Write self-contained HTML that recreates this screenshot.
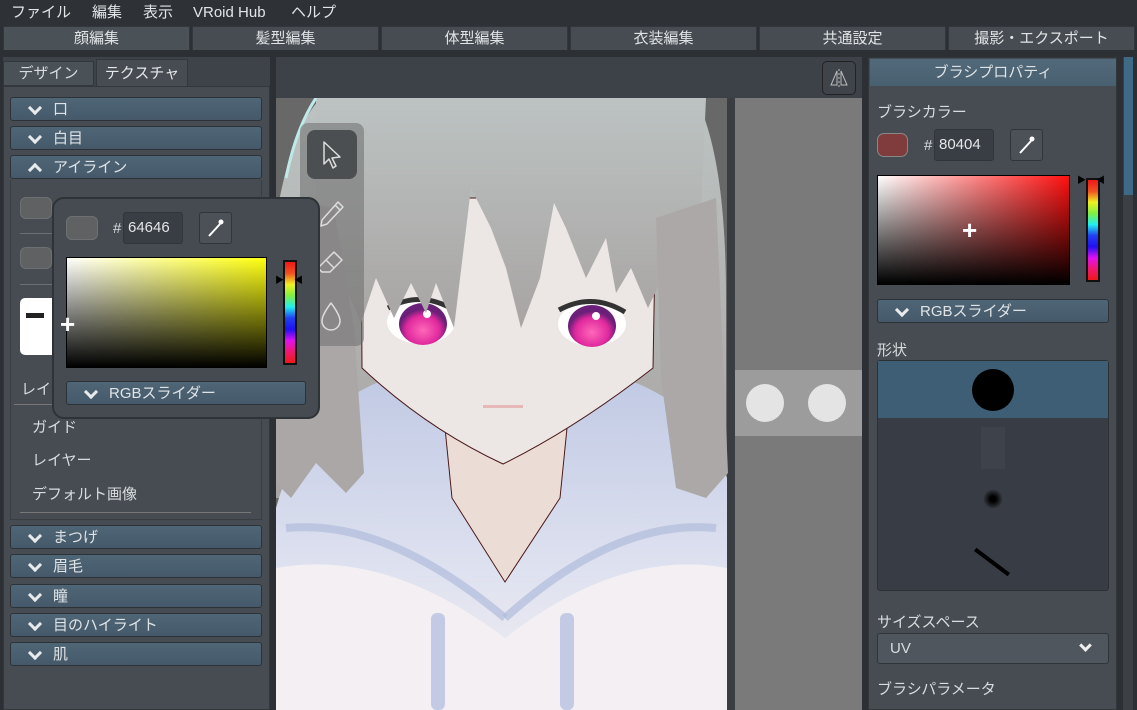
<!DOCTYPE html>
<html><head><meta charset="utf-8"><style>
*{box-sizing:border-box;margin:0;padding:0}
body{width:1137px;height:710px;overflow:hidden;background:#2c3034;font-family:"Liberation Sans","Noto Sans CJK JP",sans-serif;color:#d8dcdf;position:relative}
.a{position:absolute;line-height:20px}
.menu span{position:absolute;top:3px;font-size:15px;line-height:20px;color:#e2e4e6}
.tab{position:absolute;top:26px;height:24px;background:#464c52;border:1px solid #32373b;border-bottom:none;text-align:center;font-size:15px;line-height:23px;color:#e0e3e5}
.acc{position:absolute;left:10px;width:252px;height:24px;background:linear-gradient(#4f6676,#45596a);border:1px solid #2c3338;border-radius:3px;font-size:15px;line-height:23px;color:#dfe3e6;padding-left:42px}
.acc:before{content:"";position:absolute;left:19px;top:5px;width:7px;height:7px;border-right:3px solid #e8eaec;border-bottom:3px solid #e8eaec;transform:rotate(45deg)}
.acc.up:before{top:9px;transform:rotate(-135deg)}
.hue{background:linear-gradient(#f01818,#f05020,#f0f020,#80f040,#20f0f0,#2040f0,#2010f0,#e010f0,#f01870,#f01818);border:2px solid #111}
</style></head><body>
<div class="menu a" style="left:0;top:0;width:1137px;height:26px;background:#2e3236">
<span style="left:11px">ファイル</span><span style="left:92px">編集</span><span style="left:143px">表示</span><span style="left:193px">VRoid Hub</span><span style="left:291px">ヘルプ</span></div>
<div class="tab" style="left:3px;width:187px;background:#4a5157">顔編集</div>
<div class="tab" style="left:192px;width:187px">髪型編集</div>
<div class="tab" style="left:381px;width:187px">体型編集</div>
<div class="tab" style="left:570px;width:187px">衣装編集</div>
<div class="tab" style="left:759px;width:187px">共通設定</div>
<div class="tab" style="left:948px;width:187px">撮影・エクスポート</div>

<!-- left panel -->
<div class="a" style="left:3px;top:57px;width:267px;height:653px;background:#3d4348"></div>
<div class="a" style="left:3px;top:61px;width:91px;height:25px;background:#4a5157;border:1px solid #32373b;font-size:15px;line-height:23px;text-align:center;color:#d8dcdf">デザイン</div>
<div class="a" style="left:96px;top:59px;width:92px;height:28px;background:#464c51;border:1px solid #32373b;border-bottom:none;font-size:15px;line-height:27px;text-align:center;color:#e6e8ea">テクスチャ</div>
<div class="a" style="left:3px;top:86px;width:267px;height:624px;background:#464c51;border:1px solid #32373b"></div>
<div class="acc" style="top:97px">口</div>
<div class="acc" style="top:126px">白目</div>
<div class="acc up" style="top:155px">アイライン</div>
<div class="a" style="left:10px;top:180px;width:252px;height:340px;border:1px solid #393e43;border-top:none"></div>
<div class="a" style="left:20px;top:197px;width:32px;height:22px;background:#5f6163;border:1px solid #6e7173;border-radius:6px"></div>
<div class="a" style="left:20px;top:233px;width:240px;height:1px;background:#6b7074"></div>
<div class="a" style="left:20px;top:247px;width:32px;height:22px;background:#5f6163;border:1px solid #6e7173;border-radius:6px"></div>
<div class="a" style="left:20px;top:284px;width:240px;height:1px;background:#6b7074"></div>
<div class="a" style="left:20px;top:298px;width:40px;height:57px;background:#fff;border-radius:5px"></div>
<div class="a" style="left:26px;top:313px;width:18px;height:5px;background:#222"></div>
<div class="a" style="left:21px;top:380px;font-size:15px">レイ</div>
<div class="a" style="left:14px;top:404px;width:245px;height:1px;background:#777"></div>
<div class="a" style="left:32px;top:418px;font-size:15px">ガイド</div>
<div class="a" style="left:32px;top:451px;font-size:15px">レイヤー</div>
<div class="a" style="left:32px;top:485px;font-size:15px">デフォルト画像</div>
<div class="a" style="left:20px;top:512px;width:231px;height:1px;background:#777"></div>
<div class="acc" style="top:525px">まつげ</div>
<div class="acc" style="top:554px">眉毛</div>
<div class="acc" style="top:584px">瞳</div>
<div class="acc" style="top:613px">目のハイライト</div>
<div class="acc" style="top:642px">肌</div>

<!-- viewport -->
<div class="a" style="left:276px;top:57px;width:586px;height:41px;background:#3c4247"></div>
<div class="a" style="left:822px;top:61px;width:34px;height:34px;border:1px solid #222;border-radius:5px;background:#3e4449"></div>
<svg class="a" style="left:822px;top:61px" width="34" height="34"><path d="M15 10 L15 24 L9 24Z M19 10 L19 24 L25 24Z" fill="none" stroke="#bbb" stroke-width="1"/><path d="M17 8 V26" stroke="#bbb" stroke-dasharray="2 2"/></svg>
<svg class="a" style="left:276px;top:98px" width="586" height="612">
<defs>
<linearGradient id="hr" x1="0" y1="0" x2="0" y2="1"><stop offset="0" stop-color="#bcc3c2"/><stop offset="1" stop-color="#a8a4a3"/></linearGradient>
<radialGradient id="ey" cx=".5" cy=".65"><stop offset="0" stop-color="#ff68b8"/><stop offset=".7" stop-color="#e0289e"/><stop offset="1" stop-color="#6a2078"/></radialGradient>
<linearGradient id="hd" x1="0" y1="0" x2="0" y2="1"><stop offset="0" stop-color="#c0c9e4"/><stop offset=".6" stop-color="#dfe2f0"/><stop offset="1" stop-color="#f2eef2"/></linearGradient>
</defs>
<rect width="586" height="612" fill="#686868"/>
<rect x="451" width="8" height="612" fill="#3a3e42"/>
<rect x="459" width="127" height="612" fill="#7a7a7a"/>
<rect x="459" y="272" width="127" height="66" fill="#9c9c9c"/>
<circle cx="489" cy="305" r="19" fill="#e4e4e4"/><circle cx="551" cy="305" r="19" fill="#e4e4e4"/>
<!-- hair back -->
<path d="M45 0 L420 0 Q450 60 450 200 L450 400 L0 400 L0 120 Q15 30 45 0Z" fill="url(#hr)"/>
<!-- hoodie -->
<path d="M0 410 Q30 300 130 275 L330 275 Q425 300 451 380 L451 612 L0 612Z" fill="url(#hd)"/>
<path d="M0 470 Q110 450 229 540 Q345 450 451 470 L451 612 L0 612Z" fill="#f3eff3"/>
<path d="M10 430 Q110 420 229 520" stroke="#b0bcdc" stroke-width="8" fill="none" opacity=".7"/>
<path d="M440 430 Q340 420 229 520" stroke="#b0bcdc" stroke-width="8" fill="none" opacity=".7"/>
<rect x="155" y="515" width="14" height="97" rx="6" fill="#c3cbe4"/><rect x="284" y="515" width="14" height="97" rx="6" fill="#c3cbe4"/>
<!-- neck -->
<path d="M168 320 L176 400 L229 484 L284 400 L292 320Z" fill="#ecdcd6" stroke="#4a1a1a" stroke-width="1"/>
<!-- face -->
<path d="M85 100 L86 270 Q150 330 227 366 Q300 330 377 270 L380 100Z" fill="#ece6e4" stroke="#4a1a1a" stroke-width="1"/>
<ellipse cx="145" cy="224" rx="34" ry="22" fill="#fff"/><ellipse cx="316" cy="226" rx="34" ry="22" fill="#fff"/>
<path d="M112 210 Q145 192 178 212" stroke="#333" stroke-width="5" fill="none"/><path d="M283 212 Q316 194 349 214" stroke="#333" stroke-width="5" fill="none"/>
<ellipse cx="147" cy="226" rx="24" ry="21" fill="url(#ey)"/><ellipse cx="316" cy="228" rx="24" ry="21" fill="url(#ey)"/>
<circle cx="151" cy="216" r="4" fill="#fff"/><circle cx="320" cy="218" r="4" fill="#fff"/>
<rect x="207" y="307" width="40" height="3" fill="#e6b8b8"/>
<!-- bangs -->
<path d="M40 0 L430 0 L420 230 L408 195 L398 220 L386 180 L372 210 L355 170 L340 195 L330 140 L310 180 L290 130 L278 105 L264 180 L245 230 L230 170 L215 130 L195 90 L178 230 L160 185 L150 215 L135 185 L118 220 L100 180 L85 225 L70 190 L50 220 L40 120Z" fill="url(#hr)"/>
<path d="M0 100 L58 110 L78 230 L88 375 L70 395 L40 365 L15 400 L0 385Z" fill="#aba7a6"/>
<path d="M380 120 L440 100 L452 375 L430 400 L400 390 L385 280Z" fill="#aca8a7"/>
<path d="M40 0 Q20 30 10 80" stroke="#bfe8e8" stroke-width="3" fill="none"/>
</svg>
<!-- tool palette -->
<div class="a" style="left:300px;top:123px;width:64px;height:223px;background:rgba(110,110,110,.55);border-radius:8px"></div>
<div class="a" style="left:307px;top:130px;width:50px;height:49px;background:#4b4f52;border-radius:8px"></div>
<svg class="a" style="left:300px;top:123px" width="64" height="223" fill="none" stroke="#ddd" stroke-width="1.5" stroke-linejoin="round">
<path d="M24 19 L24 41 L29 36 L33 45 L36 43 L32 35 L40 34Z"/>
<path d="M22 97 L38 79 L43 84 L27 101 L21 103Z M35 82 L40 87"/>
<path d="M22 141 L34 129 L42 137 L30 149 L22 149 L18 145Z M26 137 L34 145"/>
<path d="M31 180 Q22 192 22 198 A9 9 0 0 0 40 198 Q40 192 31 180Z"/>
</svg>

<!-- popup -->
<div class="a" style="left:52px;top:197px;width:268px;height:222px;background:#454b50;border:2px solid #2e3337;border-radius:12px"></div>
<div class="a" style="left:66px;top:216px;width:32px;height:24px;background:#5f6163;border:1px solid #6e7173;border-radius:6px"></div>
<div class="a" style="left:113px;top:219px;font-size:15px">#</div>
<div class="a" style="left:123px;top:212px;width:60px;height:32px;background:#393e44;border:1px solid #30353a;border-radius:3px;font-size:15px;line-height:30px;padding-left:4px;color:#e4e6e8">64646</div>
<div class="a" style="left:199px;top:212px;width:33px;height:32px;background:#4b5157;border:1px solid #30353a;border-radius:3px"></div>
<svg class="a" style="left:199px;top:212px" width="33" height="32"><path d="M10 24 L21 12" stroke="#fff" stroke-width="2"/><circle cx="22" cy="10" r="2.5" fill="#fff"/></svg>
<div class="a" style="left:66px;top:257px;width:201px;height:111px;border:1px solid #000;background:linear-gradient(to top,#000,rgba(0,0,0,0)),linear-gradient(to right,#fff,#ffff10)"></div>
<div class="a" style="left:60px;top:311px;color:#fff;font-size:26px;font-weight:bold;line-height:26px">+</div>
<div class="a hue" style="left:283px;top:260px;width:14px;height:105px"></div>
<div class="a" style="left:275px;top:270px;font-size:9px;color:#000">▶&nbsp;&nbsp;&nbsp;&nbsp;◀</div>
<div class="acc" style="left:66px;top:381px;width:240px;">RGBスライダー</div>

<!-- right panel -->
<div class="a" style="left:868px;top:57px;width:249px;height:653px;background:#464c51;border:1px solid #32373b"></div>
<div class="a" style="left:1123px;top:57px;width:10px;height:653px;background:#3b4045"></div>
<div class="a" style="left:1124px;top:57px;width:9px;height:138px;background:#3f6a85"></div>
<div class="a" style="left:870px;top:59px;width:246px;height:27px;background:linear-gradient(#51697a,#48606f);font-size:15px;line-height:27px;text-align:center;color:#dfe3e6">ブラシプロパティ</div>
<div class="a" style="left:877px;top:103px;font-size:15px">ブラシカラー</div>
<div class="a" style="left:877px;top:133px;width:31px;height:24px;background:#803c3c;border:1px solid #888;border-radius:7px"></div>
<div class="a" style="left:924px;top:136px;font-size:15px">#</div>
<div class="a" style="left:934px;top:129px;width:60px;height:32px;background:#393e44;border:1px solid #30353a;border-radius:3px;font-size:15px;line-height:30px;padding-left:4px;color:#e4e6e8">80404</div>
<div class="a" style="left:1010px;top:129px;width:33px;height:32px;background:#4b5157;border:1px solid #30353a;border-radius:3px"></div>
<svg class="a" style="left:1010px;top:129px" width="33" height="32"><path d="M10 24 L21 12" stroke="#fff" stroke-width="2"/><circle cx="22" cy="10" r="2.5" fill="#fff"/></svg>
<div class="a" style="left:877px;top:175px;width:193px;height:110px;border:1px solid #000;background:linear-gradient(to top,#000,rgba(0,0,0,0)),linear-gradient(to right,#fff,#ff1010)"></div>
<div class="a" style="left:962px;top:217px;color:#fff;font-size:26px;font-weight:bold;line-height:26px">+</div>
<div class="a hue" style="left:1086px;top:178px;width:14px;height:104px"></div>
<div class="a" style="left:1077px;top:170px;font-size:9px;color:#000">▶&nbsp;&nbsp;&nbsp;&nbsp;◀</div>
<div class="acc" style="left:877px;top:299px;width:232px;">RGBスライダー</div>
<div class="a" style="left:877px;top:341px;font-size:15px">形状</div>
<div class="a" style="left:877px;top:360px;width:232px;height:231px;background:#383c44;border:1px solid #2c3035;border-radius:3px"></div>
<div class="a" style="left:878px;top:361px;width:230px;height:57px;background:#3d5e75"></div>
<div class="a" style="left:972px;top:369px;width:42px;height:42px;border-radius:50%;background:#000"></div>
<div class="a" style="left:981px;top:427px;width:24px;height:42px;background:#3e424a"></div>
<div class="a" style="left:983px;top:489px;width:20px;height:20px;border-radius:50%;background:radial-gradient(#000 20%,rgba(0,0,0,0) 70%)"></div>
<div class="a" style="left:971px;top:560px;width:42px;height:4px;background:#000;transform:rotate(37deg)"></div>
<div class="a" style="left:877px;top:613px;font-size:15px">サイズスペース</div>
<div class="a" style="left:877px;top:633px;width:232px;height:31px;background:#4f565d;border:1px solid #30353a;border-radius:3px;font-size:15px;line-height:29px;padding-left:12px">UV</div>
<div class="a" style="left:1081px;top:641px;width:9px;height:9px;border-right:3px solid #eee;border-bottom:3px solid #eee;transform:rotate(45deg)"></div>
<div class="a" style="left:877px;top:680px;font-size:15px">ブラシパラメータ</div>
</body></html>
